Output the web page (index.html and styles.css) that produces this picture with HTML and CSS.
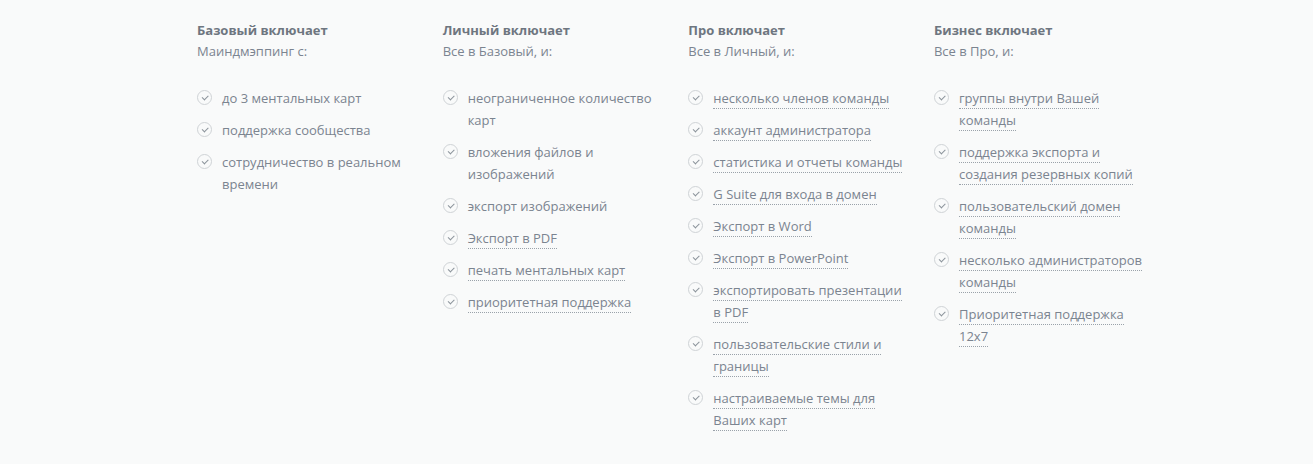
FILE: index.html
```html
<!DOCTYPE html>
<html lang="ru">
<head>
<meta charset="utf-8">
<link rel="stylesheet" href="styles.css">
</head>
<body>
<div class="plans">
  <div class="col">
    <div class="title">Базовый включает</div>
    <div class="sub">Маиндмэппинг с:</div>
    <ul class="list">
      <li><span class="chk"></span><span class="txt">до 3 ментальных карт</span></li>
      <li><span class="chk"></span><span class="txt">поддержка сообщества</span></li>
      <li><span class="chk"></span><span class="txt">сотрудничество в реальном времени</span></li>
    </ul>
  </div>
  <div class="col">
    <div class="title">Личный включает</div>
    <div class="sub">Все в Базовый, и:</div>
    <ul class="list">
      <li><span class="chk"></span><span class="txt">неограниченное количество карт</span></li>
      <li><span class="chk"></span><span class="txt">вложения файлов и изображений</span></li>
      <li><span class="chk"></span><span class="txt">экспорт изображений</span></li>
      <li><span class="chk"></span><span class="txt"><span class="u">Экспорт в PDF</span></span></li>
      <li><span class="chk"></span><span class="txt"><span class="u">печать ментальных карт</span></span></li>
      <li><span class="chk"></span><span class="txt"><span class="u">приоритетная поддержка</span></span></li>
    </ul>
  </div>
  <div class="col">
    <div class="title">Про включает</div>
    <div class="sub">Все в Личный, и:</div>
    <ul class="list">
      <li><span class="chk"></span><span class="txt"><span class="u">несколько членов команды</span></span></li>
      <li><span class="chk"></span><span class="txt"><span class="u">аккаунт администратора</span></span></li>
      <li><span class="chk"></span><span class="txt"><span class="u">статистика и отчеты команды</span></span></li>
      <li><span class="chk"></span><span class="txt"><span class="u">G Suite для входа в домен</span></span></li>
      <li><span class="chk"></span><span class="txt"><span class="u">Экспорт в Word</span></span></li>
      <li><span class="chk"></span><span class="txt"><span class="u">Экспорт в PowerPoint</span></span></li>
      <li><span class="chk"></span><span class="txt"><span class="u">экспортировать презентации в PDF</span></span></li>
      <li><span class="chk"></span><span class="txt"><span class="u">пользовательские стили и границы</span></span></li>
      <li><span class="chk"></span><span class="txt"><span class="u">настраиваемые темы для Ваших карт</span></span></li>
    </ul>
  </div>
  <div class="col">
    <div class="title">Бизнес включает</div>
    <div class="sub">Все в Про, и:</div>
    <ul class="list">
      <li><span class="chk"></span><span class="txt"><span class="u">группы внутри Вашей команды</span></span></li>
      <li><span class="chk"></span><span class="txt"><span class="u">поддержка экспорта и создания резервных копий</span></span></li>
      <li><span class="chk"></span><span class="txt"><span class="u">пользовательский домен команды</span></span></li>
      <li><span class="chk"></span><span class="txt"><span class="u">несколько администраторов команды</span></span></li>
      <li><span class="chk"></span><span class="txt"><span class="u">Приоритетная поддержка 12x7</span></span></li>
    </ul>
  </div>
</div>
</body>
</html>
```
FILE: styles.css
```css
html, body {
  margin: 0;
  padding: 0;
  background: #f9fafa;
}
body {
  font-family: "Open Sans", "Noto Sans", sans-serif;
  font-size: 13px;
  color: #7b8490;
}
.plans {
  display: flex;
  padding: 20px 0 0 197px;
}
.col {
  width: 245.67px;
  flex: none;
}
.title {
  font-weight: 700;
  color: #6e7680;
  line-height: 21px;
}
.sub {
  line-height: 21px;
  color: #7b8490;
}
.list {
  list-style: none;
  margin: 25px 0 0;
  padding: 0;
}
.list li {
  display: flex;
  align-items: flex-start;
  line-height: 22px;
  margin-bottom: 10px;
}
.chk {
  flex: none;
  width: 13px;
  height: 13px;
  border: 1px solid #cfd3d6;
  border-radius: 50%;
  margin: 3px 10px 0 0;
  position: relative;
}
.chk::after {
  content: "";
  position: absolute;
  left: 4px;
  top: 4px;
  width: 5px;
  height: 2.5px;
  border-left: 1px solid #8b939b;
  border-bottom: 1px solid #8b939b;
  transform: rotate(-45deg);
}
.txt {
  width: 192px;
}
.u {
  border-bottom: 1px dotted #9aa2aa;
  padding-bottom: 1px;
}
```
